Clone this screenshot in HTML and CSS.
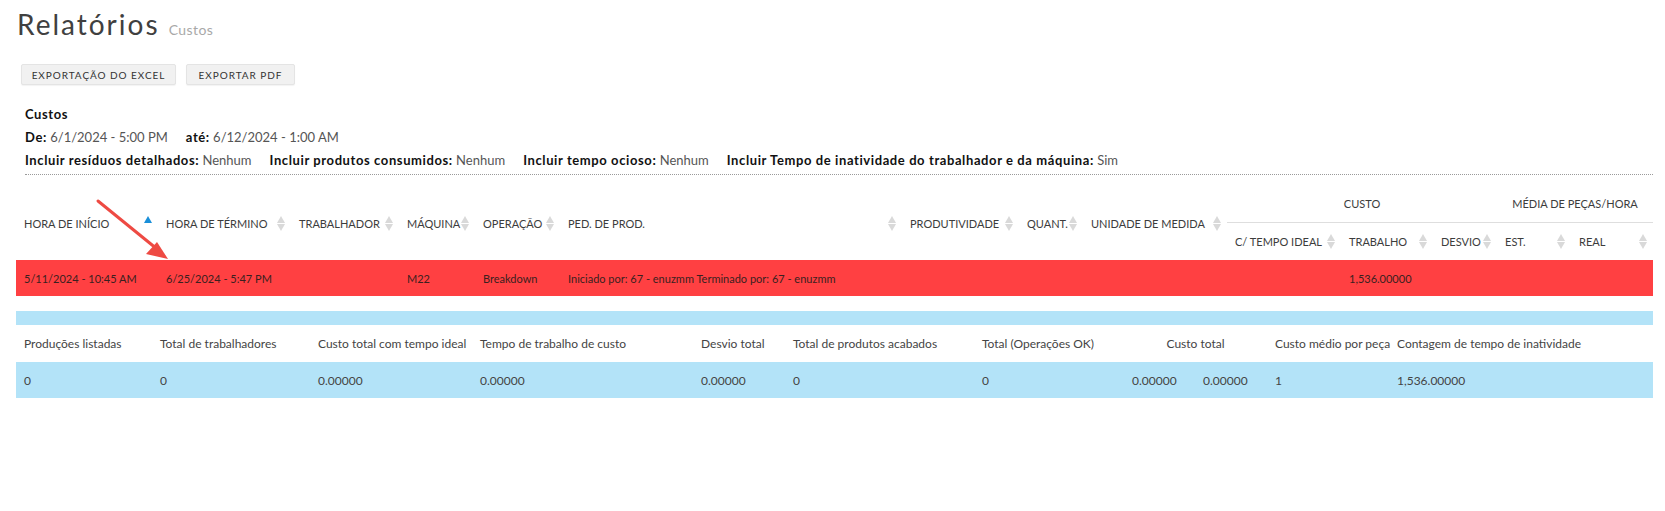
FILE: index.html
```html
<!DOCTYPE html>
<html lang="pt">
<head>
<meta charset="utf-8">
<title>Relatórios - Custos</title>
<link rel="stylesheet" href="styles.css">
</head>
<body>
<div class="page">
  <h1 class="title">Relatórios <small class="subtitle">Custos</small></h1>

  <div class="toolbar">
    <button class="btn btn-excel">EXPORTAÇÃO DO EXCEL</button>
    <button class="btn btn-pdf">EXPORTAR PDF</button>
  </div>

  <div class="info">
    <div class="info-line"><b>Custos</b></div>
    <div class="info-line"><span class="pair"><b>De:</b> 6/1/2024 - 5:00 PM</span><span class="pair"><b>até:</b> 6/12/2024 - 1:00 AM</span></div>
    <div class="info-line"><span class="pair"><b>Incluir resíduos detalhados:</b> Nenhum</span><span class="pair"><b>Incluir produtos consumidos:</b> Nenhum</span><span class="pair"><b>Incluir tempo ocioso:</b> Nenhum</span><span class="pair"><b>Incluir Tempo de inatividade do trabalhador e da máquina:</b> Sim</span></div>
  </div>

  <div class="report">
    <table class="grid">
      <colgroup>
        <col style="width:142px"><col style="width:133px"><col style="width:108px"><col style="width:76px"><col style="width:85px"><col style="width:342px"><col style="width:117px"><col style="width:64px"><col style="width:144px"><col style="width:114px"><col style="width:92px"><col style="width:64px"><col style="width:74px"><col style="width:82px">
      </colgroup>
      <thead>
        <tr class="hrow1">
          <th rowspan="2"><div class="th"><span>HORA DE INÍCIO</span><i class="sort active"></i></div></th>
          <th rowspan="2"><div class="th"><span>HORA DE TÉRMINO</span><i class="sort"></i></div></th>
          <th rowspan="2"><div class="th"><span>TRABALHADOR</span><i class="sort"></i></div></th>
          <th rowspan="2"><div class="th"><span>MÁQUINA</span><i class="sort"></i></div></th>
          <th rowspan="2"><div class="th"><span>OPERAÇÃO</span><i class="sort"></i></div></th>
          <th rowspan="2"><div class="th"><span>PED. DE PROD.</span><i class="sort"></i></div></th>
          <th rowspan="2"><div class="th"><span>PRODUTIVIDADE</span><i class="sort"></i></div></th>
          <th rowspan="2"><div class="th"><span>QUANT.</span><i class="sort"></i></div></th>
          <th rowspan="2"><div class="th"><span>UNIDADE DE MEDIDA</span><i class="sort"></i></div></th>
          <th colspan="3" class="group">CUSTO</th>
          <th colspan="2" class="group">MÉDIA DE PEÇAS/HORA</th>
        </tr>
        <tr class="hrow2">
          <th><div class="th"><span>C/ TEMPO IDEAL</span><i class="sort"></i></div></th>
          <th><div class="th"><span>TRABALHO</span><i class="sort"></i></div></th>
          <th><div class="th"><span>DESVIO</span><i class="sort"></i></div></th>
          <th><div class="th"><span>EST.</span><i class="sort"></i></div></th>
          <th><div class="th"><span>REAL</span><i class="sort"></i></div></th>
        </tr>
      </thead>
      <tbody>
        <tr class="row-alert">
          <td>5/11/2024 - 10:45 AM</td>
          <td>6/25/2024 - 5:47 PM</td>
          <td></td>
          <td>M22</td>
          <td>Breakdown</td>
          <td>Iniciado por: 67 - enuzmm Terminado por: 67 - enuzmm</td>
          <td></td>
          <td></td>
          <td></td>
          <td></td>
          <td>1,536.00000</td>
          <td></td>
          <td></td>
          <td></td>
        </tr>
      </tbody>
    </table>

    <div class="summary-bar"></div>

    <table class="summary">
      <colgroup>
        <col style="width:136px"><col style="width:158px"><col style="width:162px"><col style="width:221px"><col style="width:92px"><col style="width:189px"><col style="width:150px"><col style="width:71px"><col style="width:72px"><col style="width:122px"><col style="width:264px">
      </colgroup>
      <thead>
        <tr>
          <th>Produções listadas</th>
          <th>Total de trabalhadores</th>
          <th>Custo total com tempo ideal</th>
          <th>Tempo de trabalho de custo</th>
          <th>Desvio total</th>
          <th>Total de produtos acabados</th>
          <th>Total (Operações OK)</th>
          <th colspan="2" class="center">Custo total</th>
          <th>Custo médio por peça</th>
          <th>Contagem de tempo de inatividade</th>
        </tr>
      </thead>
      <tbody>
        <tr>
          <td>0</td>
          <td>0</td>
          <td>0.00000</td>
          <td>0.00000</td>
          <td>0.00000</td>
          <td>0</td>
          <td>0</td>
          <td>0.00000</td>
          <td>0.00000</td>
          <td>1</td>
          <td>1,536.00000</td>
        </tr>
      </tbody>
    </table>

    <svg class="annot-arrow" width="90" height="80" viewBox="0 0 90 80" aria-hidden="true">
      <line x1="3" y1="3" x2="62" y2="51" stroke="#ee4a43" stroke-width="3" stroke-linecap="round"/>
      <polygon points="73,61 51,56 62,44" fill="#ee4a43"/>
    </svg>
  </div>
</div>
</body>
</html>
```

FILE: styles.css
```css
* { box-sizing: border-box; }

body {
  margin: 0;
  background: #fff;
  font-family: Lato, "Noto Sans", "Liberation Sans", sans-serif;
  color: #3c3c3c;
}

.page {
  padding: 0 12px 0 16px;
}

.title {
  margin: 0;
  padding: 6px 0 0 1px;
  height: 46px;
  font-size: 28px;
  font-weight: 400;
  letter-spacing: 2px;
  color: #404040;
  line-height: 36px;
}

.subtitle {
  font-size: 14px;
  letter-spacing: 0.4px;
  color: #a8a8a8;
  font-weight: 400;
}

.toolbar {
  display: flex;
  gap: 10px;
  padding: 18px 0 0 5px;
}

.btn {
  height: 21px;
  padding: 0;
  font-family: inherit;
  font-size: 10px;
  letter-spacing: 0.95px;
  white-space: nowrap;
  color: #333;
  background: #f1f1f1;
  border: 1px solid #e4e4e4;
  border-radius: 2px;
  box-shadow: 0 1px 1px rgba(0,0,0,0.05);
}

.btn-excel { width: 155px; }
.btn-pdf { width: 109px; }

.info {
  padding: 18px 0 0 9px;
  font-size: 13px;
  color: #111;
}

.info-line {
  height: 23px;
  line-height: 23px;
  display: flex;
  gap: 18px;
}

.info-line b { font-weight: 700; color: #111; letter-spacing: 0.6px; }

.pair { color: #555; white-space: nowrap; }

.report {
  position: relative;
  border-top: 1px dotted #9a9a9a;
  margin-left: 9px;
  margin-top: 2px;
}

.grid, .summary {
  margin-left: -9px;
  width: 1637px;
  border-collapse: collapse;
  table-layout: fixed;
}

.grid {
  margin-top: 11px;
}

.grid th {
  font-size: 11px;
  font-weight: 400;
  letter-spacing: 0;
  color: #3c3c3c;
  text-align: left;
  padding: 0;
}

.hrow1 { height: 36px; }
.hrow2 { height: 38px; }

.th {
  display: flex;
  align-items: center;
  justify-content: space-between;
  padding: 0 5px 0 8px;
  white-space: nowrap;
}

.group {
  text-align: center !important;
  border-bottom: 1px solid #dedede;
}

.sort {
  display: inline-flex;
  flex-direction: column;
  gap: 1px;
  width: 9px;
  flex: none;
}

.sort::before, .sort::after {
  content: "";
  display: block;
  width: 0;
  height: 0;
  border-left: 4.5px solid transparent;
  border-right: 4.5px solid transparent;
}

.sort::before { border-bottom: 7px solid #d9d9d9; }
.sort::after { border-top: 7px solid #d9d9d9; }

.sort.active::before { border-bottom-color: #1a8fd9; }
.sort.active::after { border-top-color: transparent; }

.row-alert {
  height: 36px;
  background: #ff4042;
}

.row-alert td {
  font-size: 11px;
  color: #3a2020;
  padding: 0 8px;
  white-space: nowrap;
  overflow: visible;
}

.summary-bar {
  margin: 15px 0 0 -9px;
  width: 1637px;
  height: 14px;
  background: #b3e3f8;
}

.summary th {
  height: 37px;
  font-size: 12px;
  font-weight: 400;
  color: #444;
  text-align: left;
  padding: 0 8px;
  white-space: nowrap;
}

.summary th.center { text-align: center; }

.summary td {
  height: 36px;
  background: #b3e3f8;
  font-size: 12px;
  color: #444;
  padding: 0 8px;
  white-space: nowrap;
}

.annot-arrow {
  position: absolute;
  left: 70px;
  top: 23px;
}
```
